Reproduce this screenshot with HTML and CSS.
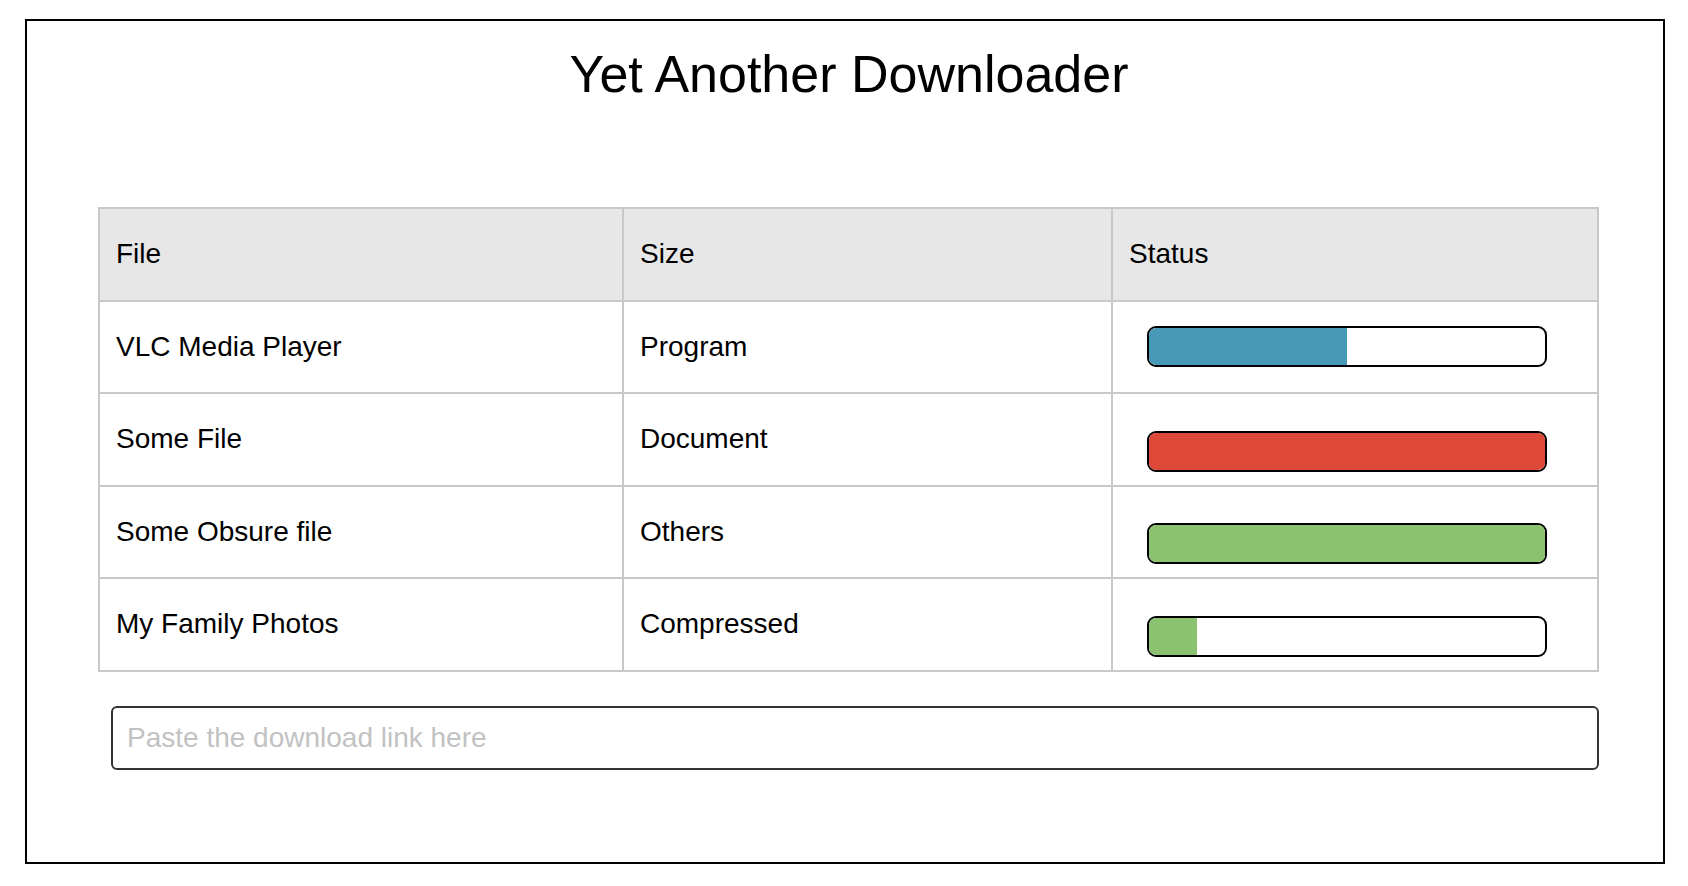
FILE: index.html
```html
<!DOCTYPE html>
<html>
<head>
<meta charset="utf-8">
<title>Yet Another Downloader</title>
<link rel="stylesheet" href="styles.css">
</head>
<body>
<div class="app">
  <h1 class="title">Yet Another Downloader</h1>
  <table class="downloads">
    <thead>
      <tr>
        <th class="col-file">File</th>
        <th class="col-size">Size</th>
        <th class="col-status">Status</th>
      </tr>
    </thead>
    <tbody>
      <tr>
        <td>VLC Media Player</td>
        <td>Program</td>
        <td><div class="bar"><div class="fill fill-blue" style="width:50%"></div></div></td>
      </tr>
      <tr>
        <td>Some File</td>
        <td>Document</td>
        <td><div class="bar bar-low"><div class="fill fill-red" style="width:100%"></div></div></td>
      </tr>
      <tr>
        <td>Some Obsure file</td>
        <td>Others</td>
        <td><div class="bar bar-low"><div class="fill fill-green" style="width:100%"></div></div></td>
      </tr>
      <tr>
        <td>My Family Photos</td>
        <td>Compressed</td>
        <td><div class="bar bar-low"><div class="fill fill-green" style="width:12%"></div></div></td>
      </tr>
    </tbody>
  </table>
  <input class="link-input" type="text" placeholder="Paste the download link here">
</div>
</body>
</html>
```
FILE: styles.css
```css
html, body {
  margin: 0;
  padding: 0;
  background: #ffffff;
}

body {
  font-family: "Liberation Sans", Arial, Helvetica, sans-serif;
  color: #000000;
}

.app {
  box-sizing: border-box;
  width: 1640px;
  height: 845px;
  margin: 19px 0 0 25px;
  border: 2px solid #000000;
  display: flex;
  flex-direction: column;
  align-items: flex-start;
}

.title {
  align-self: stretch;
  margin: 23px 0 0 0;
  padding-left: 8px;
  font-size: 52px;
  line-height: 60px;
  font-weight: normal;
  text-align: center;
}

.downloads {
  margin: 103px 0 0 71px;
  width: 1499px;
  border-collapse: collapse;
  font-size: 28px;
  table-layout: fixed;
}

.downloads th,
.downloads td {
  border: 2px solid #c8c8c8;
  height: 92.5px;
  padding: 0 0 0 16px;
  text-align: left;
  vertical-align: middle;
  font-weight: normal;
  box-sizing: border-box;
}

.downloads th {
  background: #e7e7e7;
}

.col-file { width: 524px; }
.col-size { width: 489px; }
.col-status { width: 486px; }

.bar {
  box-sizing: border-box;
  width: 400px;
  height: 41px;
  margin-left: 18px;
  border: 2px solid #000000;
  border-radius: 9px;
  overflow: hidden;
  background: #ffffff;
  display: flex;
}

.bar-low {
  margin-top: 24px;
}

.fill {
  height: 100%;
}

.fill-blue { background: #4899b7; }
.fill-red { background: #dd4838; }
.fill-green { background: #8bc270; }

.link-input {
  box-sizing: border-box;
  width: 1488px;
  height: 64px;
  margin: 34px 0 0 84px;
  padding: 0 14px;
  border: 2px solid #333333;
  border-radius: 6px;
  font-family: "Liberation Sans", Arial, Helvetica, sans-serif;
  font-size: 28px;
  color: #000000;
  background: #ffffff;
  outline: none;
}

.link-input::placeholder {
  color: #c2c2c2;
}
```
